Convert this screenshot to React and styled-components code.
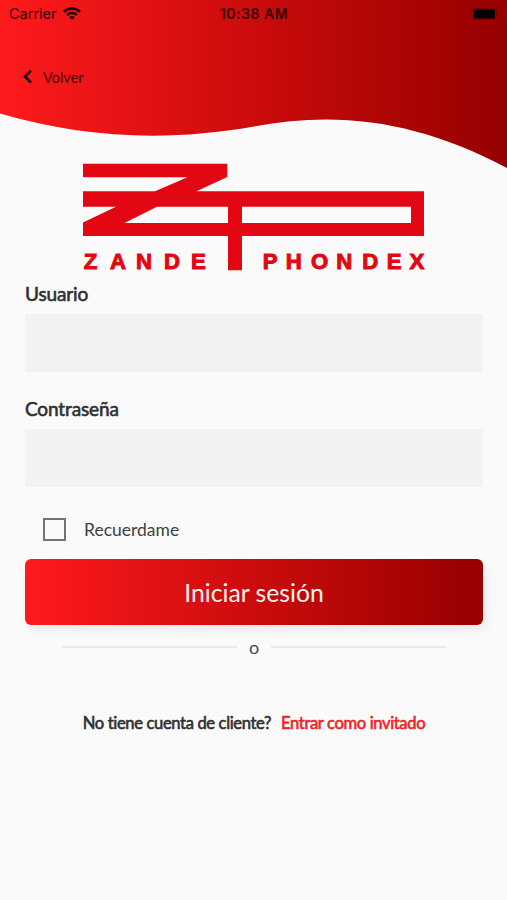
import React from "react";
import styled, { createGlobalStyle } from "styled-components";

const GlobalStyle = createGlobalStyle`
  *, *::before, *::after { box-sizing: border-box; }
  body { margin: 0; background: #fafafa; }
  button, input { font: inherit; }
`;

const brandGradient = "linear-gradient(90deg, #ff1a1c 0%, #c90b0c 52%, #960000 100%)";

const Screen = styled.div`
  width: 100%;
  height: 900px;
  overflow: hidden;
  display: flex;
  flex-direction: column;
  background: #fafafa;
  color: #303030;
  font-family: Lato, sans-serif;
`;

const Header = styled.header`
  height: 163px;
  flex: none;
  position: relative;
  isolation: isolate;
`;

const Wave = styled.svg`
  position: absolute;
  z-index: -1;
  top: 0;
  left: 0;
  width: 100%;
  height: 168px;
`;

const StatusBar = styled.div`
  height: 28px;
  padding: 0 8px 0 9px;
  display: grid;
  grid-template-columns: 1fr auto 1fr;
  align-items: center;
  color: #350000;
  font: 400 14.5px/28px Inter, sans-serif;
`;

const Carrier = styled.span`
  display: flex;
  align-items: center;
  gap: 6px;
  letter-spacing: 0;
`;

const Time = styled.span`
  font-weight: 600;
  font-size: 14px;
  letter-spacing: 0.5px;
`;

const Battery = styled.svg`
  justify-self: end;
`;

const BackButton = styled.button`
  margin: 37px 0 0 22px;
  padding: 0;
  height: 24px;
  display: flex;
  align-items: center;
  gap: 10px;
  border: 0;
  background: none;
  color: #490000;
  font-size: 14.5px;
`;

const Logo = styled.svg`
  display: block;
  flex: none;
  margin-left: 82px;
`;

const Form = styled.form`
  padding: 7px 24px 0 25px;
  display: flex;
  flex-direction: column;
`;

const Field = styled.label`
  height: 115px;
  display: flex;
  flex-direction: column;
  font-size: 19px;
  line-height: 24px;
  letter-spacing: -0.13px;
  -webkit-text-stroke: 0.6px currentColor;
`;

const Input = styled.input`
  width: 100%;
  height: 58px;
  margin-top: 8px;
  padding: 0 16px;
  border: 0;
  outline: 0;
  background: #f2f2f2;
`;

const Remember = styled.label`
  height: 24px;
  margin: 5px 0 17.5px 18px;
  display: flex;
  align-items: center;
  gap: 18px;
  font-size: 17.5px;
  color: #414141;
`;

const Checkbox = styled.input`
  appearance: none;
  width: 23px;
  height: 23px;
  margin: 0;
  border: 2px solid #747474;
`;

const SubmitButton = styled.button`
  height: 66px;
  padding: 1px 0 0;
  border: 0;
  border-radius: 6px;
  background: ${brandGradient};
  box-shadow: 3px 5px 10px rgba(0, 0, 0, 0.07);
  color: #fff2f1;
  font-size: 24.7px;
`;

const Divider = styled.div`
  height: 24px;
  margin: 10.5px 37px 0;
  display: flex;
  align-items: center;
  gap: 12px;
  font-size: 18px;
  line-height: 24px;
  color: #484848;
`;

const Rule = styled.span`
  flex: 1;
  height: 2px;
  background: #e9e9e9;
`;

const GuestRow = styled.div`
  margin-top: 52px;
  display: flex;
  justify-content: center;
  gap: 10px;
  font-size: 16.6px;
  line-height: 24px;
  letter-spacing: -0.37px;
  -webkit-text-stroke: 0.6px currentColor;
`;

const GuestLink = styled.a`
  color: #f52024;
  text-decoration: none;
`;

function WifiIcon() {
  return (
    <svg width="18" height="14" viewBox="0 0 18 14" fill="none" stroke="#230000" strokeWidth="2.5">
      <path d="M1 4.8C5.5 .4 12.5 .4 17 4.8" />
      <path d="M4.1 8C6.8 5.3 11.2 5.3 13.9 8" />
      <path d="M6.2 10.1C7.8 8.6 10.2 8.6 11.8 10.1L9 13Z" fill="#230000" stroke="none" />
    </svg>
  );
}

function BrandLogo() {
  return (
    <Logo width="346" height="112" viewBox="82 163 346 112" fill="#e30613" role="img" aria-label="Zande Phondex">
      <path
        fillRule="evenodd"
        d="M83 163.7H227.3V177L196.5 191.2H424V236H242V270.3H228V236H83V222.5L116 206.7H83V191.2H155L187.5 177.3H83ZM157 206.7L124.5 223H228V206.7ZM242 206.7V223H411V206.7Z"
      />
      <g fontFamily="Liberation Sans, sans-serif" fontWeight="700" fontSize="22.2" stroke="#e30613" strokeWidth="1">
        <text x="83.7 109.9 135.9 164 191" y="269.2">ZANDE</text>
        <text x="262.7 285.7 311 336.3 362.2 386.7 409.5" y="269.2">PHONDEX</text>
      </g>
    </Logo>
  );
}

export default function App() {
  return (
    <Screen>
      <GlobalStyle />
      <Header>
        <Wave viewBox="0 0 507 168" preserveAspectRatio="none">
          <defs>
            <linearGradient id="header-red">
              <stop offset="0" stopColor="#ff1a1c" />
              <stop offset=".52" stopColor="#c90b0c" />
              <stop offset="1" stopColor="#960000" />
            </linearGradient>
          </defs>
          <path
            fill="url(#header-red)"
            d="M0 0H507V168C421 122 340 110 254 126.5C165 142 85 138 0 113.5Z"
          />
        </Wave>
        <StatusBar>
          <Carrier>
            Carrier
            <WifiIcon />
          </Carrier>
          <Time>10:38 AM</Time>
          <Battery width="28" height="12" viewBox="0 0 28 12">
            <rect x=".5" y=".5" width="25" height="11" rx="3" fill="none" stroke="#000" opacity=".2" />
            <rect x="2" y="1.5" width="22" height="9" rx="1.5" fill="#000" />
            <path d="M26.5 4Q28 6 26.5 8Z" opacity=".3" />
          </Battery>
        </StatusBar>
        <BackButton type="button">
          <svg width="11" height="16" viewBox="0 0 11 16" fill="none" stroke="#1c0000" strokeWidth="2.6">
            <path d="M9 1.7L3 7.7L9 13.7" />
          </svg>
          Volver
        </BackButton>
      </Header>
      <BrandLogo />
      <Form onSubmit={(event) => event.preventDefault()}>
        <Field>
          Usuario
          <Input type="text" name="usuario" />
        </Field>
        <Field>
          Contraseña
          <Input type="password" name="password" />
        </Field>
        <Remember>
          <Checkbox type="checkbox" />
          Recuerdame
        </Remember>
        <SubmitButton type="submit">Iniciar sesión</SubmitButton>
        <Divider>
          <Rule />
          o
          <Rule />
        </Divider>
        <GuestRow>
          <span>No tiene cuenta de cliente?</span>
          <GuestLink href="#">Entrar como invitado</GuestLink>
        </GuestRow>
      </Form>
    </Screen>
  );
}
